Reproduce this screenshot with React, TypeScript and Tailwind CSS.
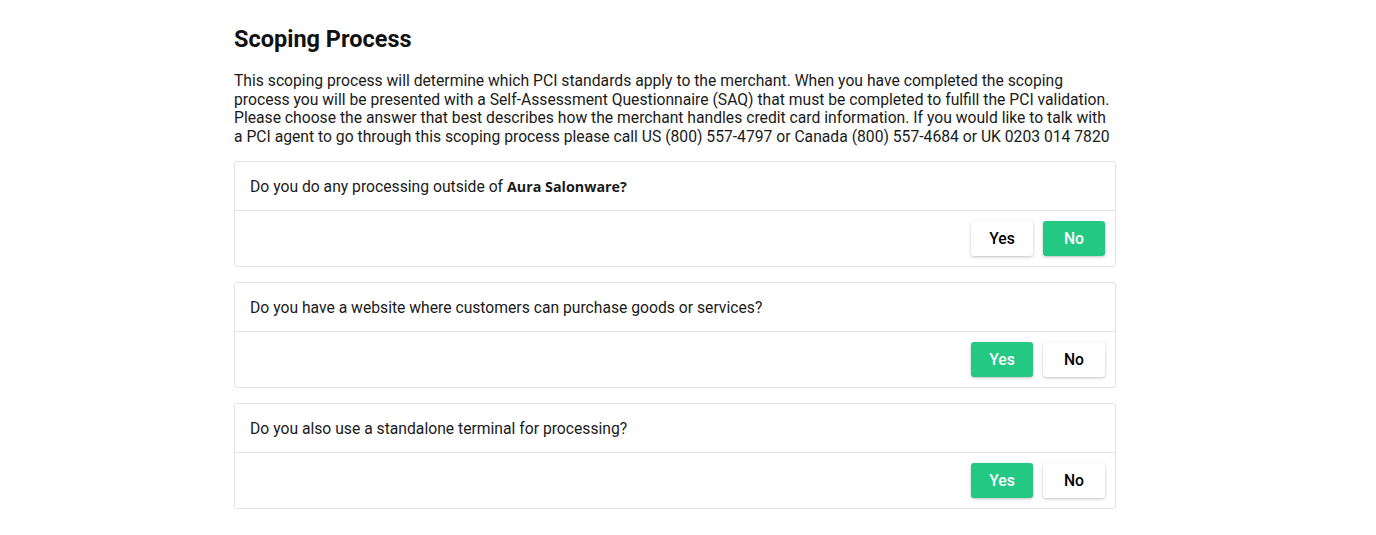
import React, { useState } from "react"

interface QuestionProps {
    question: React.ReactNode,
    value: boolean,
    onChange: (v: boolean) => void
}

const AnswerButton = ({ label, active, onClick }: { label: string, active: boolean, onClick: () => void }) => {
    return (
        <button
            onClick={onClick}
            className={
                active
                    ? "w-[62px] h-[35px] rounded-[3px] bg-[#23c882] text-white text-[15.7px] font-medium shadow-[0_1px_3px_rgba(0,0,0,0.25)]"
                    : "w-[62px] h-[35px] rounded-[3px] bg-white text-black text-[15.7px] font-medium shadow-[0_1px_3px_rgba(0,0,0,0.25)]"
            }
        >
            {label}
        </button>
    )
}

const Question = ({ question, value, onChange }: QuestionProps) => {
    return (
        <div className="border border-[#e4e4e4] rounded-[3px] bg-white">
            <div className="h-[49px] px-[15px] flex items-center text-[15.7px] text-[#1a1a1a] border-b border-[#e4e4e4]">
                {question}
            </div>
            <div className="h-[55px] flex items-center justify-end gap-[10px] pr-[10px]">
                <AnswerButton label="Yes" active={value} onClick={() => onChange(true)} />
                <AnswerButton label="No" active={!value} onClick={() => onChange(false)} />
            </div>
        </div>
    )
}

export default function App() {
    const [answers, setAnswers] = useState([false, true, true])
    const set = (i: number) => (v: boolean) => {
        const next = [...answers]
        next[i] = v
        setAnswers(next)
    }
    return (
        <div className="min-h-[535px] bg-white font-['Roboto',sans-serif] text-black">
            <div className="w-[882px] ml-[234px] pt-[24px]">
                <h1 className="text-[23.5px] font-bold leading-[30px] text-[#111]">Scoping Process</h1>
                <p className="mt-[18px] text-[15.7px] leading-[18.6px] text-[#1a1a1a] whitespace-nowrap">
                    This scoping process will determine which PCI standards apply to the merchant. When you have completed the scoping<br />
                    process you will be presented with a Self-Assessment Questionnaire (SAQ) that must be completed to fulfill the PCI validation.<br />
                    Please choose the answer that best describes how the merchant handles credit card information. If you would like to talk with<br />
                    a PCI agent to go through this scoping process please call US (800) 557-4797 or Canada (800) 557-4684 or UK 0203 014 7820
                </p>
                <div className="mt-[15px] flex flex-col gap-[15px]">
                    <Question
                        question={<span>Do you do any processing outside of <b className="font-['Open_Sans',sans-serif] font-bold text-[14.3px]">Aura Salonware?</b></span>}
                        value={answers[0]}
                        onChange={set(0)}
                    />
                    <Question
                        question="Do you have a website where customers can purchase goods or services?"
                        value={answers[1]}
                        onChange={set(1)}
                    />
                    <Question
                        question="Do you also use a standalone terminal for processing?"
                        value={answers[2]}
                        onChange={set(2)}
                    />
                </div>
            </div>
        </div>
    )
}
